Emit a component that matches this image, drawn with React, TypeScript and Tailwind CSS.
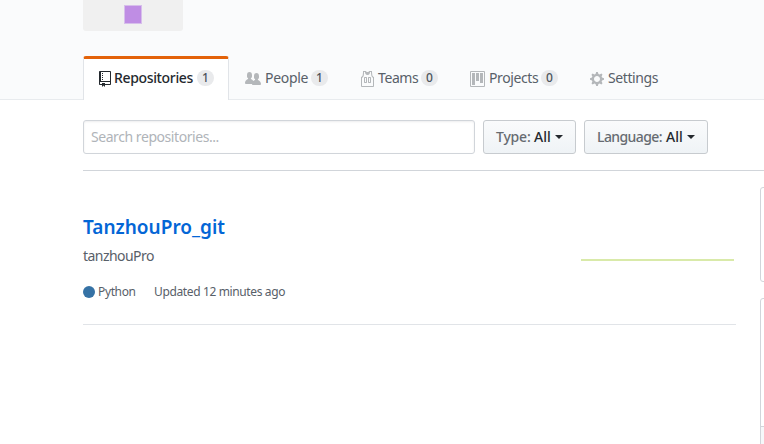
import type { ReactNode } from "react";

const icons = {
  repo: "M4 9H3V8h1v1zm0-3H3v1h1V6zm0-2H3v1h1V4zm0-2H3v1h1V2zm8-1v12c0 .55-.45 1-1 1H6v2l-1.5-1.5L3 16v-2H1c-.55 0-1-.45-1-1V1c0-.55.45-1 1-1h10c.55 0 1 .45 1 1zm-1 10H1v2h2v-1h3v1h5v-2zm0-10H2v9h9V1z",
  people: "M16 12.999c0 .439-.45 1-1 1H7.995c-.539 0-.994-.447-.995-.999H1c-.54 0-1-.561-1-1 0-2.634 3-4 3-4s.229-.409 0-1c-.841-.621-1.058-.59-1-3 .058-2.419 1.367-3 2.5-3s2.442.58 2.5 3c.058 2.41-.159 2.379-1 3-.229.59 0 1 0 1s1.549.711 2.42 2.088C9.196 9.369 10 8.999 10 8.999s.229-.409 0-1c-.841-.62-1.058-.59-1-3 .058-2.419 1.367-3 2.5-3s2.437.581 2.495 3c.059 2.41-.158 2.38-1 3-.229.59 0 1 0 1s3.005 1.366 3.005 4",
  jersey: "M4.5 6l-.5.5v5l.5.5h2l.5-.5v-5L6.5 6h-2zM6 11H5V7h1v4zm6.27-7.25C12.05 2.37 11.96 1.12 12 0H9.02c0 .27-.13.48-.39.69-.25.2-.63.3-1.13.3-.5 0-.88-.09-1.13-.3-.23-.2-.36-.42-.37-.69H3c.05 1.13-.03 2.38-.25 3.75C2.55 5.13 1.95 5.88 1 6v9c.02.27.13.48.31.69.18.21.42.3.69.31h11c.27-.02.48-.13.69-.31.21-.18.3-.42.31-.69V6c-.95-.13-1.53-.88-1.75-2.25h.02zM13 15H2V7c.89-.5 1.48-1.25 1.72-2.25S4.03 2.5 4 1h1c-.02.78.16 1.47.52 2.06.36.58 1.02.89 2 .94.98-.02 1.64-.33 2-.94.36-.59.5-1.28.48-2.06h1c.02 1.42.13 2.55.33 3.38.2.81.69 1.69 1.67 2.62v8zM8.5 6l-.5.5v5l.5.5h2l.5-.5v-5l-.5-.5h-2zm1.5 5H9V7h1v4z",
  project: "M10 12h3V2h-3v10zm-4-2h3V2H6v8zm-4 4h3V2H2v12zm-1 1h13V1H1v14zM14 0H1a1 1 0 0 0-1 1v14a1 1 0 0 0 1 1h13a1 1 0 0 0 1-1V1a1 1 0 0 0-1-1z",
  gear: "M14 8.77v-1.6l-1.94-.64-.45-1.09.88-1.84-1.13-1.13-1.81.91-1.09-.45-.69-1.92h-1.6l-.63 1.94-1.11.45-1.84-.88-1.13 1.13.91 1.81-.45 1.09L0 7.23v1.59l1.94.64.45 1.09-.88 1.84 1.13 1.13 1.81-.91 1.09.45.69 1.92h1.59l.63-1.94 1.11-.45 1.84.88 1.13-1.13-.92-1.81.47-1.09L14 8.75v.02zM7 11c-1.66 0-3-1.34-3-3s1.34-3 3-3 3 1.34 3 3-1.34 3-3 3z",
};

function Octicon({ path, width, className }: { path: string; width: number; className: string }) {
  return (
    <svg width={width} height={16} viewBox={`0 0 ${width} 16`} fill="currentColor" fillRule="evenodd" className={`shrink-0 ${className}`}>
      <path d={path} />
    </svg>
  );
}

function Counter({ children }: { children: ReactNode }) {
  return (
    <span className="flex h-4 w-[17px] shrink-0 items-center justify-center rounded-full bg-[#e9eaec] text-xs font-medium leading-4 text-[#4c545c]">
      {children}
    </span>
  );
}

function Tab({ icon, iconWidth, label, count, className, labelClass }: {
  icon: string; iconWidth: number; label: string; count?: number; className: string; labelClass: string;
}) {
  return (
    <a className={`flex h-[41px] items-start pl-4 pt-2 text-sm leading-4 text-[#586069] ${className}`}>
      <Octicon path={icon} width={iconWidth} className="mt-1 text-[#b4b7ba]" />
      <span className={`mt-[3px] shrink-0 whitespace-nowrap ${labelClass}`}>{label}</span>
      {count !== undefined && <span className="mt-[3px]"><Counter>{count}</Counter></span>}
    </a>
  );
}

function FilterButton({ label, className, labelClass }: { label: string; className: string; labelClass: string }) {
  return (
    <button className={`flex h-[34px] items-center rounded-[3px] border border-[#c7cbcf] bg-linear-to-b from-[#fafbfc] to-[#eff3f6] pl-3 text-sm font-medium leading-5 text-[#24292e] ${className}`}>
      <span className={`shrink-0 text-left text-[#666b71] ${labelClass}`}>{label}</span>
      <span className="w-[16px] shrink-0">All</span>
      <span className="ml-[5px] border-x-4 border-t-4 border-x-transparent border-t-[#24292e]" />
    </button>
  );
}

export default function App() {
  return (
    <div className="flex h-[444px] w-[764px] flex-col overflow-hidden bg-white font-['Noto_Sans',sans-serif] text-[#586069]">
      <header className="flex h-[100px] shrink-0 flex-col justify-between border-b border-[#e8ebee] bg-[#fafbfc] pl-[83px]">
        <div className="flex h-[31px] w-[100px] items-start justify-center rounded-b-[3px] bg-[#f0f0f0] pt-[5px]">
          <div className="h-[19px] w-[18px] border border-[#d7bfeb] bg-[#bf8de4]" />
        </div>
        <nav className="-mb-px flex items-end">
          <a className="flex h-11 w-[146px] items-start rounded-t-[3px] border-x border-t-[3px] border-x-[#e1e4e8] border-t-[#e36209] bg-white pl-[15px] text-sm font-medium leading-4 text-[#24292e]">
            <Octicon path={icons.repo} width={12} className="mt-3" />
            <span className="ml-[3px] mt-[11px] w-[83px] shrink-0 whitespace-nowrap tracking-[-0.35px]">Repositories</span>
            <span className="mt-[11px]"><Counter>1</Counter></span>
          </a>
          <Tab icon={icons.people} iconWidth={16} label="People" count={1} className="w-[115px]" labelClass="ml-[4px] w-[46px] tracking-[-0.3px]" />
          <Tab icon={icons.jersey} iconWidth={14} label="Teams" count={0} className="w-[110px]" labelClass="ml-[4px] w-[43px] tracking-[-0.4px]" />
          <Tab icon={icons.project} iconWidth={15} label="Projects" count={0} className="w-[120px]" labelClass="ml-[4px] w-[52px] tracking-[-0.4px]" />
          <Tab icon={icons.gear} iconWidth={14} label="Settings" className="" labelClass="ml-[4px] tracking-[-0.4px]" />
        </nav>
      </header>

      <section className="ml-[83px] flex h-[71px] shrink-0 items-start border-b border-[#d1d5da] pt-5">
        <input
          placeholder="Search repositories..."
          className="h-[34px] w-[392px] rounded-[3px] border border-[#d1d5da] px-[7px] pb-0.5 text-sm tracking-[-0.44px] shadow-[inset_0_1px_2px_rgba(27,31,35,0.075)] placeholder:text-[#b0b4b9]"
        />
        <FilterButton label="Type:" className="ml-2 w-[93px]" labelClass="w-[38px] tracking-[-0.2px]" />
        <FilterButton label="Language:" className="ml-2 w-[124px]" labelClass="w-[69px] tracking-[-0.6px]" />
      </section>

      <main className="flex flex-1 justify-between pl-[83px]">
        <div className="w-[653px]">
          <article className="flex h-[154px] justify-between border-b border-[#e1e4e8] pt-[41px]">
            <div>
              <h3 className="text-[19px] font-semibold leading-[30px] text-[#0366d6]">TanzhouPro_git</h3>
              <p className="mt-[3px] text-sm leading-[21px] tracking-[-0.55px]">tanzhouPro</p>
              <div className="mt-[17px] flex items-center text-xs leading-[18px] tracking-[-0.37px]">
                <span className="-mt-px mr-[3px] size-3 rounded-full bg-[#3572a5]" />
                <span className="w-[56px]">Python</span>
                <span className="whitespace-nowrap">Updated 12 minutes ago</span>
              </div>
            </div>
            <div className="mr-0.5 mt-[47px] h-0.5 w-[153px] bg-[#d9eaa9]" />
          </article>
        </div>
        <aside className="w-1 shrink-0 overflow-hidden pt-4">
          <div className="h-[95px] w-40 rounded-[3px] border border-[#d1d5da]" />
          <div className="mt-4 h-[180px] w-40 rounded-[3px] border border-[#d1d5da]">
            <div className="mt-[127px] h-[51px] border-t border-[#d1d5da] bg-[#f6f8fa]" />
          </div>
        </aside>
      </main>
    </div>
  );
}
